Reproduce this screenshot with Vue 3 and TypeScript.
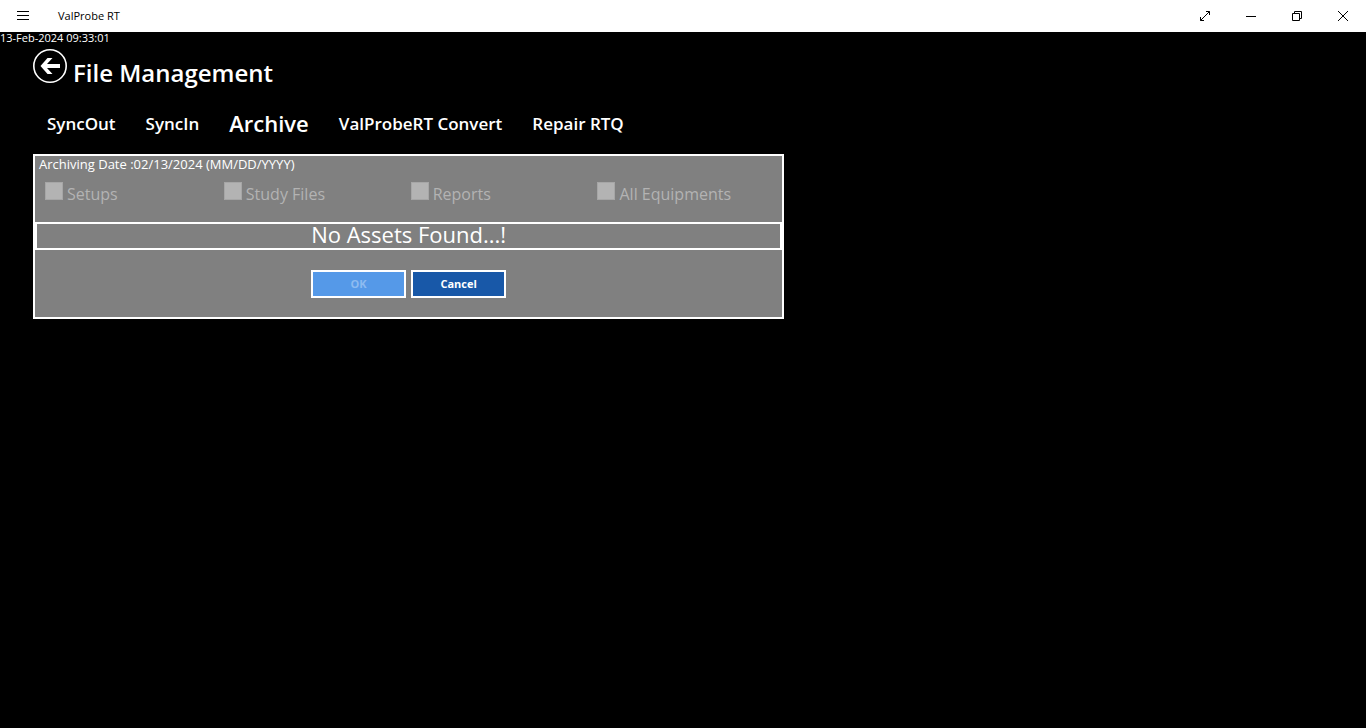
<script setup lang="ts">
import { ref } from 'vue'

interface Tab {
  id: string
  label: string
}

interface Category {
  id: string
  label: string
}

const tabs: Tab[] = [
  { id: 'sync-out', label: 'SyncOut' },
  { id: 'sync-in', label: 'SyncIn' },
  { id: 'archive', label: 'Archive' },
  { id: 'convert', label: 'ValProbeRT Convert' },
  { id: 'repair', label: 'Repair RTQ' },
]

const categories: Category[] = [
  { id: 'setups', label: 'Setups' },
  { id: 'study-files', label: 'Study Files' },
  { id: 'reports', label: 'Reports' },
  { id: 'all-equipments', label: 'All Equipments' },
]

const activeTab = ref('archive')
const timestamp = '13-Feb-2024 09:33:01'
const archivingDate = '02/13/2024'
</script>

<template>
  <div class="app">
    <header class="titlebar">
      <button class="menu" type="button" aria-label="Menu">
        <svg width="12" height="10" viewBox="0 0 12 10" shape-rendering="crispEdges" fill="#000">
          <rect width="12" height="1" />
          <rect y="4" width="12" height="1" />
          <rect y="8" width="12" height="1" />
        </svg>
      </button>
      <span class="app-name">ValProbe RT</span>
      <div class="window-controls">
        <button type="button" aria-label="Full screen">
          <svg width="10" height="10" viewBox="0 0 10 10" fill="none" stroke="#000">
            <path d="M.5 9.500L9.500 .5M6 .5H9.500V4M.5 6V9.500H4" />
          </svg>
        </button>
        <button type="button" aria-label="Minimize">
          <svg width="10" height="10" viewBox="0 0 10 10" shape-rendering="crispEdges" fill="#000">
            <rect y="5" width="10" height="1" />
          </svg>
        </button>
        <button type="button" aria-label="Restore">
          <svg width="10" height="10" viewBox="0 0 10 10" fill="none" stroke="#000">
            <path d="M.5 2.500H7.500V9.500H.5ZM2.500 2.500V.5H9.500V7.500H7.500" />
          </svg>
        </button>
        <button type="button" aria-label="Close">
          <svg width="10" height="10" viewBox="0 0 10 10" fill="none" stroke="#000">
            <path d="M0 0L10 10M10 0L0 10" />
          </svg>
        </button>
      </div>
    </header>

    <time class="clock">{{ timestamp }}</time>

    <main class="content">
      <div class="heading">
        <button class="back" type="button" aria-label="Back">
          <svg width="34" height="34" viewBox="0 0 34 34">
            <circle cx="17" cy="17" r="16.200" fill="none" stroke="#fff" stroke-width="1.600" />
            <path d="M7.500 17L14.500 9H19.500L14 15H27V19H14L19.500 25H14.500Z" fill="#fff" />
          </svg>
        </button>
        <h1>File Management</h1>
      </div>

      <nav class="tabs">
        <button
          v-for="tab in tabs"
          :key="tab.id"
          type="button"
          :class="['tab', { active: tab.id === activeTab }]"
          @click="activeTab = tab.id"
        >{{ tab.label }}</button>
      </nav>

      <section class="panel">
        <p class="date">Archiving Date :{{ archivingDate }} (MM/DD/YYYY)</p>
        <div class="categories">
          <div v-for="category in categories" :key="category.id" class="category">
            <input :id="category.id" type="checkbox" disabled />
            <label :for="category.id">{{ category.label }}</label>
          </div>
        </div>
        <p class="message">No Assets Found...!</p>
        <div class="actions">
          <button class="ok" type="button" disabled>OK</button>
          <button class="cancel" type="button">Cancel</button>
        </div>
      </section>
    </main>
  </div>
</template>

<style>
body {
  background: #000;
}
</style>

<style scoped>
.app {
  min-height: 100vh;
  background: #000;
  color: #fff;
  font-family: "Open Sans", "Noto Sans", sans-serif;
}

button {
  padding: 0;
  border: 0;
  background: none;
  color: inherit;
  font: inherit;
}

svg {
  display: block;
}

.titlebar {
  display: flex;
  align-items: center;
  height: 32px;
  background: #fff;
  color: #000;
}

.menu {
  display: flex;
  justify-content: center;
  width: 46px;
}

.app-name {
  margin-left: 12px;
  padding-bottom: 2px;
  font-size: 11px;
}

.window-controls {
  display: flex;
  height: 100%;
  margin-left: auto;
}

.window-controls button {
  display: flex;
  align-items: center;
  justify-content: center;
  width: 46px;
}

.clock {
  display: block;
  font-size: 11px;
  line-height: 12px;
}

.content {
  padding: 5px 33px;
}

.heading {
  display: flex;
  gap: 6px;
  height: 52px;
}

.back {
  align-self: flex-start;
}

h1 {
  margin: 6px 0 0;
  font-size: 24px;
  line-height: 36px;
  font-weight: 600;
}

.tabs {
  display: flex;
  align-items: center;
  gap: 30px;
  height: 44px;
  margin-bottom: 9px;
  padding-left: 14px;
}

.tab {
  font-size: 17px;
  font-weight: 600;
  white-space: nowrap;
}

.tab.active {
  font-size: 22px;
}

.panel {
  box-sizing: border-box;
  width: 55vw;
  min-width: 600px;
  border: 2px solid #fff;
  background: #808080;
}

.date {
  margin: 0;
  padding-left: 4px;
  font-size: 13px;
  line-height: 16px;
}

.categories {
  display: grid;
  grid-template-columns: repeat(4, 1fr);
  height: 50px;
}

.category {
  display: flex;
  align-items: flex-start;
  gap: 4px;
  padding: 10px 0 0 2px;
  color: #b3b3b3;
}

.category:first-child {
  padding-left: 10px;
}

.category input {
  appearance: none;
  width: 18px;
  height: 18px;
  margin: 0;
  border: 1px solid #a6a6a6;
  background: #b3b3b3;
}

.category label {
  font-size: 16px;
  line-height: 24px;
}

.message {
  margin: 0;
  padding-bottom: 4px;
  border: 2px solid #fff;
  font-size: 22px;
  line-height: 20px;
  text-align: center;
}

.actions {
  display: flex;
  justify-content: center;
  gap: 5px;
  padding: 20px 0 19px;
}

.actions button {
  width: 95px;
  height: 28px;
  padding-bottom: 2px;
  border: 2px solid #fff;
  font-size: 11px;
  font-weight: 700;
}

.ok {
  background: #5599e8;
  color: #8dbbf0;
}

.cancel {
  background: #1858a8;
}
</style>
